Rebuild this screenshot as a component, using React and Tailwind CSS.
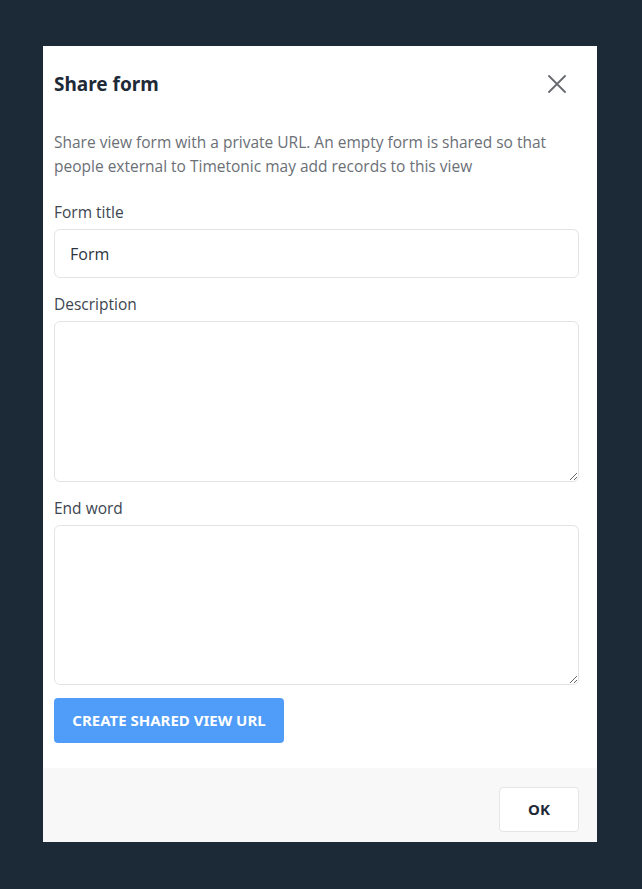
export default function App() {
  return (
    <div
      className="min-h-[889px] w-full bg-[#1c2a38] pt-[46px] px-[43px]"
      style={{ fontFamily: '"Open Sans", "Noto Sans", sans-serif' }}
    >
      <div className="bg-white w-[554px] flex flex-col">
        {/* Header */}
        <div className="flex items-center justify-between pl-[11px] pr-[31px] pt-[14px] h-[76px] pb-[14px]">
          <h2
            className="text-[19px] font-bold text-[#1e2a37]"
            style={{ fontFamily: '"Noto Sans", sans-serif' }}
          >
            Share form
          </h2>
          <svg width="18" height="18" viewBox="0 0 18 18" className="text-[#666a6e]">
            <path d="M1 1L17 17M17 1L1 17" stroke="currentColor" strokeWidth="1.8" strokeLinecap="round" />
          </svg>
        </div>

        <div className="pl-[11px] pr-[18px] pt-[8px] pb-[25px]">
          <p className="text-[15.5px] leading-[24px] text-[#6b6f76]">
            Share view form with a private URL. An empty form is shared so that
            people external to Timetonic may add records to this view
          </p>

          <label className="block mt-[23px] mb-[6px] text-[15.5px] leading-[22px] text-[#3d4550]">
            Form title
          </label>
          <input
            defaultValue="Form"
            className="w-full h-[49px] px-[15px] border border-[#e3e3e3] rounded-[6px] text-[16px] text-[#2c3440] outline-none"
          />

          <label className="block mt-[15px] mb-[6px] text-[15.5px] leading-[22px] text-[#3d4550]">
            Description
          </label>
          <textarea className="block w-full h-[161px] border border-[#e3e3e3] rounded-[6px] outline-none" />

          <label className="block mt-[15px] mb-[6px] text-[15.5px] leading-[22px] text-[#3d4550]">
            End word
          </label>
          <textarea className="block w-full h-[160px] border border-[#e3e3e3] rounded-[6px] outline-none" />

          <button
            className="mt-[13px] h-[45px] w-[230px] rounded-[4px] bg-[#4f9cf9] text-white text-[15px] font-bold"
            style={{ fontFamily: '"Noto Sans", sans-serif' }}
          >
            CREATE SHARED VIEW URL
          </button>
        </div>

        {/* Footer */}
        <div className="bg-[#f8f8f8] h-[74px] flex items-start justify-end pt-[19px] pr-[18px]">
          <button
            className="h-[45px] w-[80px] bg-white border border-[#e5e5e5] rounded-[4px] text-[15px] font-bold text-[#1e2a37]"
            style={{ fontFamily: '"Noto Sans", sans-serif' }}
          >
            OK
          </button>
        </div>
      </div>
    </div>
  );
}
